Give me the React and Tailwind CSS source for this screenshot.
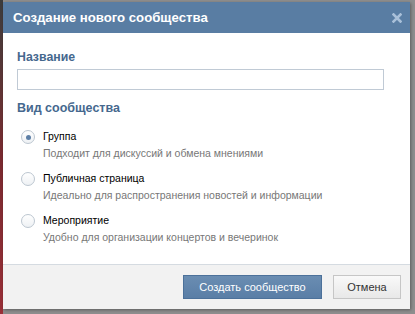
import React, { useState } from 'react';

const options = [
  { id: 'group', title: 'Группа', desc: 'Подходит для дискуссий и обмена мнениями' },
  { id: 'page', title: 'Публичная страница', desc: 'Идеально для распространения новостей и информации' },
  { id: 'event', title: 'Мероприятие', desc: 'Удобно для организации концертов и вечеринок' },
];

const App = () => {
  const [type, setType] = useState('group');
  const [name, setName] = useState('');

  return (
    <div className="flex h-[314px] w-[415px] overflow-hidden bg-[#8e8e8e] font-['Liberation_Sans',sans-serif]">
      {/* page behind the box */}
      <div className="h-full w-[3px] bg-gradient-to-b from-[#3c3c3c] via-[#7a2a30] to-[#9a3038]" />

      {/* Dialog */}
      <div className="mt-[2px] flex h-[307px] w-[407px] flex-col bg-white shadow-[1px_1px_3px_rgba(0,0,0,0.35)]">
        {/* Header */}
        <div className="flex h-[31px] shrink-0 items-center justify-between bg-[#597da3] pl-[10px] pr-[8px]">
          <span className="text-[13.2px] font-bold text-white">Создание нового сообщества</span>
          <svg width="10" height="10" viewBox="0 0 10 10">
            <path d="M1.5 1.5 L8.5 8.5 M8.5 1.5 L1.5 8.5" stroke="#a9c0d9" strokeWidth="2.6" strokeLinecap="square" />
          </svg>
        </div>

        {/* Body */}
        <div className="flex flex-1 flex-col px-[14px] pt-[16px]">
          <div className="text-[12.3px] font-bold leading-[16px] text-[#45688e]">Название</div>
          <input
            value={name}
            onChange={(e) => setName(e.target.value)}
            className="mt-[4px] h-[21px] w-[367px] border border-[#c0cad5] px-1 text-[11px] outline-none"
          />
          <div className="mt-[10px] text-[12.5px] font-bold leading-[16px] text-[#45688e]">Вид сообщества</div>

          <div className="mt-[13px] flex flex-col gap-[10px] pl-[4px]">
            {options.map((o) => (
              <label key={o.id} className="flex cursor-pointer items-start gap-[8px]" onClick={() => setType(o.id)}>
                <span className="mt-[1px] flex h-[14px] w-[14px] items-center justify-center rounded-full border border-[#bcc6d0] bg-gradient-to-b from-white to-[#eef1f4]">
                  {type === o.id && <span className="h-[5px] w-[5px] rounded-full bg-[#5d7fa6]" />}
                </span>
                <span className="flex flex-col">
                  <span className="text-[10.5px] leading-[15px] text-black">{o.title}</span>
                  <span className="mt-[2px] text-[10.5px] leading-[15px] text-[#777777]">{o.desc}</span>
                </span>
              </label>
            ))}
          </div>
        </div>

        {/* Footer */}
        <div className="flex h-[45px] shrink-0 items-center justify-end gap-[11px] border-t border-[#d5dbe1] bg-[#f2f2f2] pr-[9px]">
          <button className="h-[24px] w-[139px] border border-[#4c719a] bg-gradient-to-b from-[#6a8db2] to-[#5a7ea6] text-[11px] text-white">
            Создать сообщество
          </button>
          <button className="h-[24px] w-[68px] border border-[#c6c6c6] bg-gradient-to-b from-[#f9f9f9] to-[#e8e8e8] text-[11px] text-[#333]">
            Отмена
          </button>
        </div>
      </div>
    </div>
  );
};

export default App;
